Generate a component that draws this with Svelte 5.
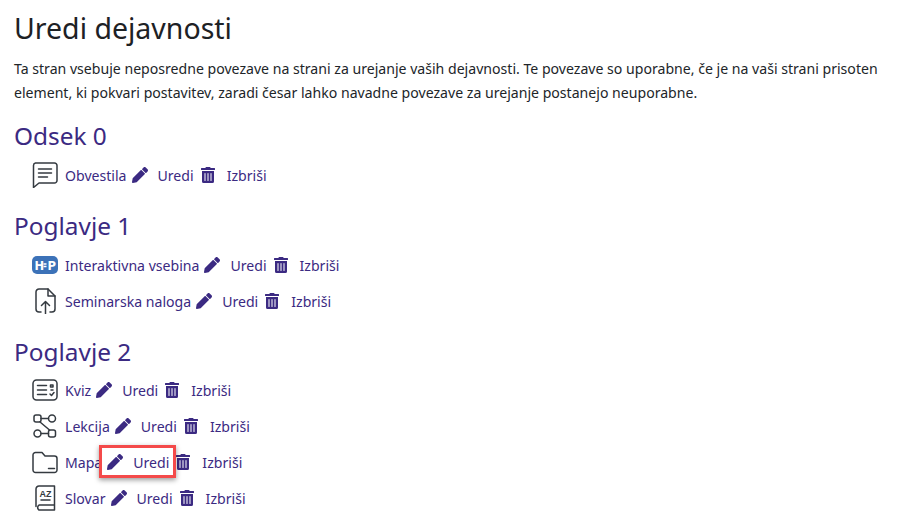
<script lang="ts">
	const sections = [
		{ title: 'Odsek 0', items: [{ name: 'Obvestila', icon: 'forum' }] },
		{
			title: 'Poglavje 1',
			items: [
				{ name: 'Interaktivna vsebina', icon: 'h5p' },
				{ name: 'Seminarska naloga', icon: 'assign' }
			]
		},
		{
			title: 'Poglavje 2',
			items: [
				{ name: 'Kviz', icon: 'quiz' },
				{ name: 'Lekcija', icon: 'lesson' },
				{ name: 'Mapa', icon: 'folder' },
				{ name: 'Slovar', icon: 'glossary' }
			]
		}
	];
</script>

<main>
	<h1>Uredi dejavnosti</h1>
	<p>Ta stran vsebuje neposredne povezave na strani za urejanje vaših dejavnosti. Te povezave so uporabne, če je na vaši strani prisoten element, ki pokvari postavitev, zaradi česar lahko navadne povezave za urejanje postanejo neuporabne.</p>

	{#each sections as section}
		<section>
			<h2>{section.title}</h2>
			{#each section.items as item}
				<div class="row">
					<span class="icon">
						{#if item.icon === 'forum'}
							<svg viewBox="0 0 26 26" class="line"><path d="M3.500 1h19A2.500 2.500 0 0 1 25 3.500v15a2.500 2.500 0 0 1-2.500 2.500H7l-5.500 4.500V3.500A2.500 2.500 0 0 1 3.500 1z"/><path d="M6.500 7h13M6.500 11h13M6.500 15h9"/></svg>
						{:else if item.icon === 'h5p'}
							<svg viewBox="0 0 26 18" class="h5p"><rect width="26" height="18" rx="5"/><text x="2.500" y="13.500">H</text><path d="M11.500 8h3M11.500 10.500h3"/><text x="15.500" y="13.500">P</text></svg>
						{:else if item.icon === 'assign'}
							<svg viewBox="0 0 26 26" class="line"><path d="M9 24H7a3 3 0 0 1-3-3V4a3 3 0 0 1 3-3h9l7 7v13a3 3 0 0 1-3 3h-2"/><path d="M16 1v7h7"/><path d="M13.500 26V13.500M9.500 17.500l4-4 4 4"/></svg>
						{:else if item.icon === 'quiz'}
							<svg viewBox="0 0 26 26" class="line"><rect x="1" y="3" width="24" height="20" rx="3.500"/><path d="M5.500 8.500h9M5.500 13h9M5.500 17.500h9M18 17l1.500 1.500 2.500-3"/><path d="M18.500 8h2.500v2h-2.500zM19 13h2"/></svg>
						{:else if item.icon === 'lesson'}
							<svg viewBox="0 0 26 26" class="line"><rect x="2" y="2" width="7" height="7" rx="2"/><circle cx="20" cy="5.500" r="3.500"/><circle cx="5.500" cy="20.500" r="3.500"/><rect x="16.500" y="17" width="7" height="7" rx="2"/><path d="M9 5.500h7.500M8 9l9.500 8M9 20.500h7.500"/></svg>
						{:else if item.icon === 'folder'}
							<svg viewBox="0 0 26 26" class="line"><path d="M1 6a2.500 2.500 0 0 1 2.500-2.500h6.500L13 7h9.500A2.500 2.500 0 0 1 25 9.500V21a2.500 2.500 0 0 1-2.500 2.500h-19A2.500 2.500 0 0 1 1 21z"/><path d="M16.500 19.500h6"/></svg>
						{:else}
							<svg viewBox="0 0 26 26" class="line"><path d="M4 21.500V4a3 3 0 0 1 3-3h15.500v19H7a3 3 0 0 0 0 5h15.500v-5"/><path d="M9 15h9"/><text x="13.500" y="12" class="az">AZ</text></svg>
						{/if}
					</span>
					<a href="#a" class="name">{item.name}</a>
					<a href="#a" class="action">
						<svg viewBox="0 0 512 512" class="fa pencil"><path d="M497.900 142.100l-46.100 46.100c-4.700 4.700-12.300 4.700-17 0l-111-111c-4.700-4.700-4.700-12.300 0-17l46.100-46.100c18.700-18.700 49.100-18.700 67.900 0l60.100 60.100c18.800 18.700 18.800 49.100 0 67.900zM284.200 99.800L21.600 362.400.4 483.900c-2.900 16.400 11.400 30.600 27.800 27.800l121.500-21.300 262.600-262.600c4.700-4.700 4.700-12.300 0-17l-111-111c-4.800-4.700-12.400-4.700-17.100 0z"/></svg>
						<span>Uredi</span>
					</a>
					<a href="#a" class="action">
						<svg viewBox="0 0 448 512" class="fa trash"><path d="M32 464a48 48 0 0 0 48 48h288a48 48 0 0 0 48-48V128H32zm272-256a16 16 0 0 1 32 0v224a16 16 0 0 1-32 0zm-96 0a16 16 0 0 1 32 0v224a16 16 0 0 1-32 0zm-96 0a16 16 0 0 1 32 0v224a16 16 0 0 1-32 0zM432 32H312l-9.400-18.700A24 24 0 0 0 281.100 0H166.800a23.700 23.700 0 0 0-21.400 13.300L136 32H16A16 16 0 0 0 0 48v32a16 16 0 0 0 16 16h416a16 16 0 0 0 16-16V48a16 16 0 0 0-16-16z"/></svg>
						<span>Izbriši</span>
					</a>
				</div>
			{/each}
		</section>
	{/each}
	<div class="highlight"></div>
</main>

<style>
	:global(body) {
		background: #fff;
	}

	main {
		position: relative;
		width: 900px;
		height: 530px;
		overflow: hidden;
		box-sizing: border-box;
		padding: 7px 14px 0;
		font-family: 'Noto Sans', sans-serif;
		font-size: 14.1px;
		color: #212529;
	}

	h1 {
		margin: 0;
		font-size: 28.5px;
		font-weight: 400;
		line-height: 42px;
		color: #1d2125;
	}

	p {
		margin: 8px 0 0;
		line-height: 24px;
		width: 872px;
	}

	section {
		margin-top: 13px;
	}

	section + section {
		margin-top: 15px;
	}

	h2 {
		margin: 0 0 3px;
		font-size: 24.4px;
		font-weight: 400;
		line-height: 36px;
		color: #3b2a82;
	}

	section:last-of-type h2 {
		margin-bottom: 2px;
	}

	.row {
		display: flex;
		align-items: center;
		height: 36px;
		padding-left: 18px;
	}

	.icon {
		display: flex;
		justify-content: center;
		width: 26px;
		margin-right: 7px;
	}

	.icon svg {
		width: 26px;
		height: 26px;
	}

	.line {
		fill: none;
		stroke: #343a40;
		stroke-width: 1.500;
		stroke-linecap: round;
		stroke-linejoin: round;
	}

	.az {
		fill: #343a40;
		stroke: none;
		font-size: 9px;
		font-weight: 700;
		text-anchor: middle;
		font-family: 'Liberation Sans', sans-serif;
	}

	.icon .h5p {
		width: 26px;
		height: 18px;
	}

	.h5p rect {
		fill: #3c72b8;
	}

	.h5p text {
		fill: #fff;
		font-family: 'DejaVu Sans', sans-serif;
		font-weight: 700;
		font-size: 11.500px;
	}

	.h5p path {
		fill: none;
		stroke: #fff;
		stroke-width: 1.300;
	}

	a {
		color: #3b2a82;
		text-decoration: none;
	}

	.action {
		display: flex;
		align-items: center;
		margin-left: 5px;
	}

	.fa {
		fill: #3b2a82;
	}

	.pencil {
		width: 16px;
		height: 16px;
		margin-right: 10px;
	}

	.trash {
		width: 14px;
		height: 16px;
		margin-left: 2px;
		margin-right: 12px;
	}

	.highlight {
		position: absolute;
		left: 99px;
		top: 445px;
		width: 71px;
		height: 27px;
		border: 3px solid #f44a4a;
		box-shadow: 0 2px 5px rgba(0, 0, 0, 0.4);
	}
</style>
